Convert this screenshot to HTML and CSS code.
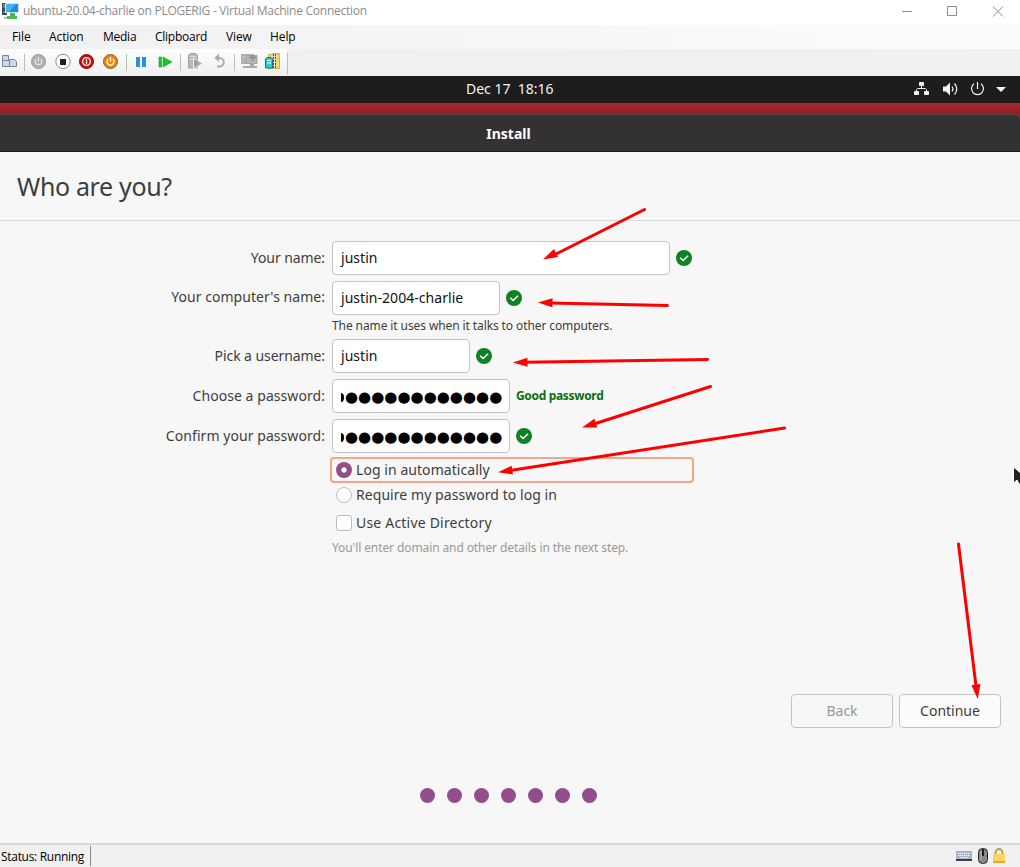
FILE: index.html
```html
<!DOCTYPE html>
<html lang="en">
<head>
<meta charset="utf-8">
<title>ubuntu-20.04-charlie on PLOGERIG - Virtual Machine Connection</title>
<link rel="stylesheet" href="styles.css">
</head>
<body>
<div class="window">
  <header class="titlebar">
    <svg class="app-icon" width="17" height="18" viewBox="0 0 17 18">
      <path d="M0 1h5v12H0z" fill="#444b50"/><path d="M1 3h3M1 5h3" stroke="#aab"/><path d="M1 10h2" stroke="#4d6"/>
      <path d="M3 1h14v10H3z" fill="#d5e2ee"/><path d="M4 2h12v8H4z" fill="#188fe0"/><path d="M4 2h10L7 10H4z" fill="#43b4f5"/>
      <path d="M8 11h5v3H8z" fill="#45b649"/><path d="M2 15h12v1.500H2z" fill="#a0a9a5"/><path d="M5 14h10v3H5z" fill="#49bd4c"/>
    </svg>
    <span class="title">ubuntu-20.04-charlie on PLOGERIG - Virtual Machine Connection</span>
    <svg class="window-controls" width="120" height="24" viewBox="0 0 120 24" fill="none" stroke="#8a8a8a">
      <path d="M2 11.500h10M47.500 6.500h9v9h-9zM93 6.500l10 10M103 6.500l-10 10"/>
    </svg>
  </header>
  <nav class="menubar">
    <span class="m-file">File</span><span class="m-action">Action</span><span class="m-media">Media</span><span class="m-clip">Clipboard</span><span class="m-view">View</span><span class="m-help">Help</span>
  </nav>
  <div class="toolbar">
    <svg width="290" height="27" viewBox="0 0 290 27">
      <g fill="#cdd7e8" stroke="#76839f"><path d="M2.500 6.500h6v5h-6zM2.500 11.500h7v6h-7zM9.500 10.500h5l2 2v5h-7z"/></g>
      <path d="M24.500 5v17M126.500 5v17M180.500 5v17M234.500 5v17M287.500 4v21" stroke="#bcbcbc"/>
      <circle cx="38.500" cy="12.500" r="7" fill="#b1b1b1" stroke="#999"/>
      <path d="M36.300 10.200a3.200 3.200 0 1 0 4.400 0M38.500 8v4.500" fill="none" stroke="#e4e4e4" stroke-width="1.300"/>
      <circle cx="63" cy="12.500" r="7.200" fill="#fff" stroke="#888"/><path d="M60 10h6v6h-6z" fill="#222"/>
      <circle cx="86.500" cy="12.500" r="7" fill="#cf0c0c" stroke="#880909"/><circle cx="86.500" cy="12.500" r="3.800" fill="none" stroke="#fff" stroke-width="1.300"/><path d="M86.500 10v5" stroke="#fff" stroke-width="1.300"/>
      <circle cx="110.500" cy="12.500" r="7" fill="#e8870c" stroke="#985a12"/>
      <path d="M108.200 10a3.500 3.500 0 1 0 4.600 0M110.500 7.800v4.700" fill="none" stroke="#fff" stroke-width="1.400"/>
      <path d="M136 8h4v10h-4zM142 8h4v10h-4z" fill="#2d8fe3"/>
      <path d="M159 8h2.500v10H159zM163 8l9 5-9 5z" fill="#1fc132" stroke="#11a321" stroke-width=".6"/>
      <path d="M188.500 6l2-1.500h5l2 1.500v13h-9z" fill="#b8b8b8" stroke="#a2a2a2"/><path d="M190 7.500h6M190 10.500h6" stroke="#e0e0e0"/>
      <path d="M193.500 9l9 5.500-9 5.500z" fill="#aaa" stroke="#ececec"/><path d="M196 11v6" stroke="#8d8d8d"/>
      <path d="M215.500 9h4a4 4 0 0 1 0 8.500H217" fill="none" stroke="#aaa" stroke-width="2"/><path d="M219 4.500v8.500l-4.500-4z" fill="#aaa"/>
      <path d="M241 5h10v10h-10z" fill="#b2b2b2"/><path d="M243 8h6" stroke="#d8d8d8"/><path d="M246 6.500h11v8h-11z" fill="#b6b6b6" stroke="#a1a1a1"/><path d="M252.500 5v7M249 8.500h7" stroke="#8f8f8f" stroke-width="2"/><path d="M250 15h4v2h-4zM243 17h14v2h-14z" fill="#aaa"/>
      <path d="M268.500 5.500h4v-1h7v15h-11z" fill="#f4d774" stroke="#d5ad43"/><path d="M274.500 5v14" stroke="#55534e" stroke-width="3" stroke-dasharray="2 1"/><path d="M274.500 5v14" stroke="#ddd"/><path d="M265.500 10l1.500-1.500h4l1.500 1.500v9h-7z" fill="#24d0d5" stroke="#16717c"/><path d="M267 11.500h4M267 14h4" stroke="#eaffff"/>
    </svg>
  </div>
  <div class="topbar">
    <span class="clock">Dec 17&nbsp; 18:16</span>
    <svg class="tray" width="106" height="27" viewBox="0 0 106 27">
      <g fill="#f1f1f1"><rect x="5" y="6" width="5" height="4" rx=".8"/><rect x="0" y="15" width="5" height="4" rx=".8"/><rect x="10" y="15" width="5" height="4" rx=".8"/><path d="M29 10.500h3l4-4v13l-4-4h-3zM82 11h10l-5 5z"/></g>
      <g fill="none" stroke="#f1f1f1"><path d="M7.500 10v2.500M2.500 15v-1.500l1-1h8l1 1V15"/><path d="M38 10.500q2 2.500 0 5M40.500 7.500q4.500 5.500 0 11" stroke-width="1.200"/><path d="M60 7.700a6 6 0 1 0 7 0M63.500 6v7" stroke-width="1.200"/></g>
    </svg>
  </div>
  <div class="wallpaper"><div class="install-bar">Install</div></div>
  <main class="installer">
    <h1>Who are you?</h1>
    <section class="form">
      <div class="row"><label class="l-name">Your name:</label><div class="field wide">justin</div><svg class="check"><use href="#ok"/></svg></div>
      <div class="row"><label class="l-comp">Your computer's name:</label><div class="field host">justin-2004-charlie</div><svg class="check"><use href="#ok"/></svg></div>
      <p class="hint h-comp">The name it uses when it talks to other computers.</p>
      <div class="row"><label class="l-name">Pick a username:</label><div class="field user">justin</div><svg class="check"><use href="#ok"/></svg></div>
      <div class="row"><label class="l-pass">Choose a password:</label><div class="field pass"><span class="mask">●●●●●●●●●●●●</span></div><strong class="quality">Good password</strong></div>
      <div class="row"><label class="l-pass">Confirm your password:</label><div class="field pass"><span class="mask">●●●●●●●●●●●●</span></div><svg class="check"><use href="#ok"/></svg></div>
      <div class="option focused"><i class="radio on"></i><span>Log in automatically</span></div>
      <div class="option require"><i class="radio"></i><span>Require my password to log in</span></div>
      <div class="option directory"><i class="box"></i><span>Use Active Directory</span></div>
      <p class="hint h-dir">You'll enter domain and other details in the next step.</p>
    </section>
    <div class="actions"><div class="button disabled">Back</div><div class="button">Continue</div></div>
    <div class="dots"><i></i><i></i><i></i><i></i><i></i><i></i><i></i></div>
  </main>
  <footer class="statusbar">
    <span class="status">Status: Running</span>
    <svg width="64" height="22" viewBox="0 0 64 22">
      <path d="M0 6h16v10H0z" fill="#a9b5c6"/><path d="M0 14h16v2H0z" fill="#354050"/><path d="M2 8.500h12M2 10.500h12M4 12.500h8" stroke="#fff" stroke-dasharray="1.300 .7"/>
      <rect x="22.500" y="3.500" width="9" height="15" rx="4" fill="#888" stroke="#292929"/><path d="M27 4v7" stroke="#222" stroke-width="2"/><path d="M25 6v9" stroke="#bbb"/>
      <path d="M39.500 10V7.500a3.500 3.500 0 0 1 7 0v2.500" fill="none" stroke="#bd9b4a" stroke-width="1.800"/><path d="M37 9h12v9H37z" fill="#fbd35d"/><path d="M37 17h12" stroke="#e4ac27" stroke-width="2"/>
    </svg>
  </footer>
  <svg class="annotations" width="1020" height="867" viewBox="0 0 1020 867">
    <g stroke="#f00" stroke-width="3" stroke-linecap="round">
      <path d="M644.500 209.500L554 255M667.500 305.500L550 303M707.500 359.500L525 362.300M710.500 386.500L594 424M784.500 428L510 470.500M958.500 544L976 686"/>
    </g>
    <g fill="#f00">
      <path d="M0 0L14.500-4.500V4.500z" transform="translate(543 259.500) rotate(-26.500)"/>
      <path d="M0 0L14.500-4.500V4.500z" transform="translate(538 302.500) rotate(1.300)"/>
      <path d="M0 0L14.500-4.500V4.500z" transform="translate(513 362.500) rotate(-.9)"/>
      <path d="M0 0L14.500-4.500V4.500z" transform="translate(582 427.500) rotate(-17.500)"/>
      <path d="M0 0L14.500-4.500V4.500z" transform="translate(498 472.300) rotate(-8.800)"/>
      <path d="M0 0L14.500-4.500V4.500z" transform="translate(977.700 699) rotate(-97)"/>
    </g>
    <path d="M1013.500 467v16l3.500-3 2 4h4v-9z" fill="#222" stroke="#fff"/>
  </svg>
  <svg class="symbols" width="0" height="0"><symbol id="ok" viewBox="0 0 16 16"><circle cx="8" cy="8" r="8" fill="#118224"/><path d="M4.200 7.800l2.900 2.700 5-4.700" fill="none" stroke="#fff" stroke-width="1.500"/></symbol></svg>
</div>
</body>
</html>
```
FILE: styles.css
```css
* { box-sizing: border-box; }
body { margin: 0; }
.window {
  position: relative; width: 1020px; height: 867px; overflow: hidden;
  display: flex; flex-direction: column; background: #f7f7f7;
  font-family: "Noto Sans", sans-serif; white-space: nowrap;
}
.window svg { display: block; flex: none; }
.titlebar { height: 25px; display: flex; background: #fff; padding-left: 2px; font: 12px/22px "Open Sans", sans-serif; color: #8b8b8b; }
.app-icon { margin-top: 2px; }
.title { margin-left: 4px; letter-spacing: -.26px; }
.window-controls { margin-left: auto; }
.menubar { height: 24px; display: flex; padding-left: 12px; background: linear-gradient(90deg, #f0f0f0, #fcfcfc 95%); font: 12px/24px "Open Sans", sans-serif; color: #000; }
.menubar span { flex: none; letter-spacing: -.1px; }
.m-file { width: 37px; } .m-action { width: 54px; } .m-media { width: 52px; } .m-clip { width: 71px; } .m-view { width: 44px; }
.menubar .m-media, .menubar .m-clip { letter-spacing: -.25px; }
.toolbar { height: 27px; background: linear-gradient(#fdfdfd, #f0f0f0) 0 0 / 287px 100% no-repeat #f0f0f0; }
.topbar { height: 27px; display: flex; justify-content: flex-end; background: #1d1d1d; color: #f2f2f2; font-size: 14px; line-height: 26px; }
.clock { width: 448px; }
.wallpaper { height: 49px; padding-top: 11px; background: linear-gradient(#aa262b, #8d2025 11px, #a92328 15px); }
.install-bar { height: 38px; border-top: 1px solid #4b4848; border-bottom: 1px solid #191919; border-radius: 0 6px 0 0; background: #333132; color: #fff; text-align: center; font-weight: bold; font-size: 14px; line-height: 37px; padding-right: 3px; }
.installer { height: 691px; color: #3d3d3d; font-size: 14px; }
h1 { margin: 0; height: 69px; padding-left: 17px; border-bottom: 1px solid #dadada; font-size: 25px; font-weight: 400; line-height: 69px; letter-spacing: -.35px; }
.form { height: 473px; padding-top: 20px; display: flex; flex-direction: column; }
.row { display: flex; align-items: center; height: 34px; margin-bottom: 6px; }
.row label { width: 326px; text-align: right; padding: 0 1px 1px 0; margin-right: 6px; }
.row .l-name { letter-spacing: -.08px; }
.row .l-comp { padding-bottom: 3px; letter-spacing: .04px; }
.row .l-pass { letter-spacing: .06px; }
.field { height: 34px; border: 1px solid #c4c4c4; border-radius: 4px; background: #fff; color: #111; padding: 0 8px; line-height: 31px; margin-right: 6px; letter-spacing: .04px; }
.wide { width: 338px; } .host { width: 168px; } .user { width: 138px; } .pass { width: 178px; }
.pass { display: flex; align-items: center; }
.pass::before { content: ""; flex: none; width: 3px; height: 9px; margin-top: 3px; border-radius: 0 3px 3px 0 / 0 4.500px 4.500px 0; background: #000; }
.mask { margin-left: 1px; padding-top: 1px; color: #000; font: 15px/32px "DejaVu Sans", sans-serif; letter-spacing: .02px; }
.check { width: 16px; height: 16px; }
.hint { margin: 0 0 0 332px; font-size: 12px; line-height: 18px; letter-spacing: -.1px; }
.h-comp { margin-top: -4px; height: 22px; }
.quality { color: #0b700b; font-size: 12px; padding-bottom: 2px; letter-spacing: -.33px; }
.option { display: flex; align-items: center; height: 26px; margin-left: 336px; letter-spacing: .06px; }
.option span { padding-bottom: 1px; }
.focused { width: 364px; margin: -2px 0 0 330px; padding-left: 4px; border: 2px solid #f2a78c; border-radius: 4px; }
.require { margin-top: -1px; }
.radio, .box { flex: none; width: 16px; height: 16px; border: 1px solid #bdbdbd; background: #fff; border-radius: 50%; margin-right: 4px; }
.on { border: 0; background: radial-gradient(circle, #fff 2.300px, #924d8b 3px); }
.box { border-radius: 3px; }
.directory { margin-top: 2px; letter-spacing: .2px; }
.h-dir { color: #999; margin-top: 3px; }
.actions { display: flex; justify-content: flex-end; gap: 6px; padding-right: 19px; }
.button { width: 102px; height: 34px; border: 1px solid #c4c4c4; border-radius: 4px; background: #fcfcfc; text-align: center; line-height: 32px; }
.disabled { background: #f7f7f7; color: #999; }
.dots { display: flex; gap: 12px; margin: 60px 0 0 420px; }
.dots i { width: 15px; height: 15px; border-radius: 50%; background: #924d8b; }
.statusbar { height: 24px; display: flex; justify-content: space-between; border-top: 2px solid #d9d9d9; background: #f0f0f0; }
.status { width: 91px; height: 20px; margin-top: 1px; padding-left: 1px; border-right: 1px solid #888; font: 12px/21px "Open Sans", sans-serif; letter-spacing: -.3px; color: #000; }
.annotations { position: absolute; left: 0; top: 0; }
.symbols { position: absolute; }
```
